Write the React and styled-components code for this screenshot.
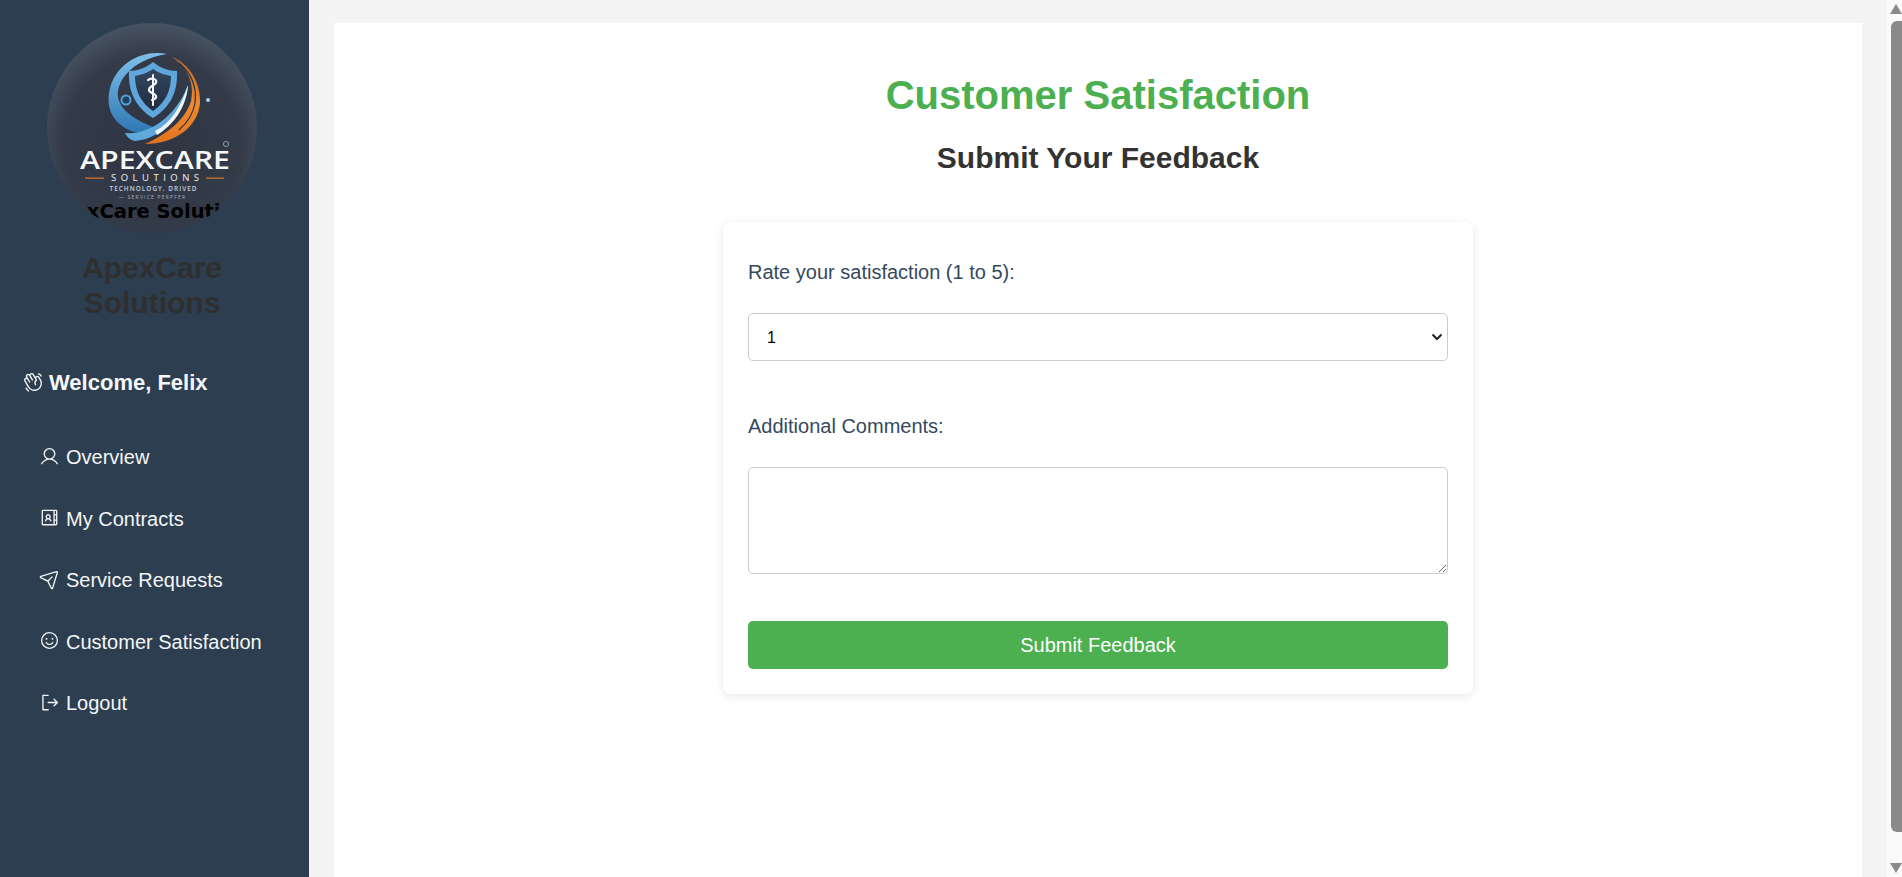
import React from 'react';
import styled, { createGlobalStyle } from 'styled-components';
import { PiHandWaving, PiUser, PiAddressBookTabs, PiPaperPlaneTilt, PiSmiley, PiSignOut } from 'react-icons/pi';

const GlobalStyle = createGlobalStyle`
  body {
    margin: 0;
    background: #f4f4f4;
    font-family: "Liberation Sans", Arial, sans-serif;
  }
`;

const Page = styled.div`
  display: flex;
  min-height: 910px;
  margin-right: 15px;
`;

const Sidebar = styled.aside`
  width: 309px;
  flex-shrink: 0;
  background: #2c3e50;
  padding-top: 23px;
  box-sizing: border-box;
`;

const LogoWrap = styled.div`
  width: 210px;
  height: 210px;
  margin-left: 47px;
`;

const Brand = styled.h2`
  margin: 18px 0 0 47px;
  width: 210px;
  font-size: 30px;
  line-height: 34.5px;
  font-weight: 700;
  text-align: center;
  color: #2f2f2f;
`;

const Welcome = styled.div`
  display: flex;
  align-items: center;
  gap: 5px;
  margin: 50px 0 0 22px;
  height: 26px;
  font-size: 22px;
  font-weight: 700;
  color: #f4f6f8;
  svg {
    font-size: 22px;
    margin-top: -2px;
  }
`;

const Nav = styled.nav`
  display: flex;
  flex-direction: column;
  gap: 10.5px;
  margin-top: 36px;
  padding-left: 39px;
`;

const NavItem = styled.a`
  display: flex;
  align-items: center;
  gap: 6px;
  height: 51px;
  font-size: 20px;
  color: #f4f6f8;
  svg {
    font-size: 21px;
    margin-top: -3px;
  }
`;

const Main = styled.main`
  flex: 1;
  padding: 23px 25px 25px;
  min-width: 0;
`;

const Panel = styled.section`
  background: #fff;
  height: 100%;
  box-sizing: border-box;
  padding-top: 49px;
`;

const Title = styled.h1`
  margin: 0;
  font-size: 40px;
  line-height: 46px;
  font-weight: 700;
  text-align: center;
  color: #4caf50;
`;

const Subtitle = styled.h2`
  margin: 22px 0 0;
  font-size: 30px;
  line-height: 35px;
  font-weight: 700;
  text-align: center;
  color: #333;
`;

const Card = styled.form`
  width: 750px;
  box-sizing: border-box;
  margin: 47px auto 0;
  padding: 25px;
  background: #fff;
  border-radius: 8px;
  box-shadow: 0 2px 10px rgba(0, 0, 0, 0.1);
`;

const Label = styled.label`
  display: block;
  margin: ${(p) => p.$top || 0}px 0 30px;
  padding-top: 14px;
  font-size: 20px;
  line-height: 22px;
  color: #34495e;
`;

const SelectWrap = styled.div`
  position: relative;
`;

const Select = styled.select`
  display: block;
  width: 100%;
  height: 48px;
  padding: 0 18px;
  box-sizing: border-box;
  appearance: none;
  background: #fff;
  color: #000;
  border: 1px solid #ccc;
  border-radius: 5px;
  font-family: inherit;
  font-size: 16px;
`;

const Chevron = styled.svg`
  position: absolute;
  right: 5px;
  top: 20px;
  width: 12px;
  height: 8px;
  pointer-events: none;
`;

const TextArea = styled.textarea`
  display: block;
  width: 100%;
  height: 107px;
  box-sizing: border-box;
  padding: 10px;
  background: #fff;
  border: 1px solid #ccc;
  border-radius: 5px;
  font-family: inherit;
  font-size: 16px;
`;

const Submit = styled.button`
  display: block;
  width: 100%;
  height: 48px;
  margin-top: 47px;
  border: none;
  border-radius: 5px;
  background: #4caf50;
  color: #fff;
  font-family: inherit;
  font-size: 20px;
`;

/* the window's scrollbar, drawn because the browser here hides its own */
const Rail = styled.div`
  position: fixed;
  top: 0;
  right: 0;
  bottom: 0;
  width: 15px;
  display: flex;
  flex-direction: column;
  align-items: flex-end;
  background: #fafafa;
`;

const Arrow = styled.div`
  width: 0;
  height: 0;
  border-left: 6px solid transparent;
  border-right: 6px solid transparent;
  ${(p) => (p.$down
    ? 'border-top: 10px solid #8a8a8a; margin-top: 31px; margin-bottom: 4px;'
    : 'border-bottom: 10px solid #8a8a8a; margin-top: 4px;')}
`;

const Thumb = styled.div`
  flex: 1;
  width: 11px;
  margin-top: 7px;
  background: #8a8a8a;
  border-radius: 6px 0 0 6px / 6px;
`;

function Logo() {
  return (
    <svg viewBox="0 0 210 210" width="210" height="210" role="img" aria-label="ApexCare Solutions logo">
      <defs>
        <radialGradient id="disc" cx="50%" cy="58%" r="60%">
          <stop offset="0" stopColor="#2f3542" />
          <stop offset="0.7" stopColor="#333a48" />
          <stop offset="1" stopColor="#4a5666" />
        </radialGradient>
        <linearGradient id="discFade" x1="0" y1="0" x2="0" y2="1">
          <stop offset="0.7" stopColor="#333a48" stopOpacity="0" />
          <stop offset="1" stopColor="#333a48" stopOpacity="0.9" />
        </linearGradient>
        <linearGradient id="blueArc" x1="0" y1="0" x2="0" y2="1">
          <stop offset="0" stopColor="#7fc0ea" />
          <stop offset="1" stopColor="#2f78b4" />
        </linearGradient>
        <linearGradient id="orangeArc" x1="0" y1="0" x2="0" y2="1">
          <stop offset="0" stopColor="#b8662a" />
          <stop offset="0.55" stopColor="#f18a2b" />
          <stop offset="1" stopColor="#e0741f" />
        </linearGradient>
        <linearGradient id="shieldFill" x1="0" y1="0" x2="0" y2="1">
          <stop offset="0" stopColor="#33475f" />
          <stop offset="1" stopColor="#1f2c3f" />
        </linearGradient>
        <clipPath id="discClip">
          <circle cx="105" cy="105" r="105" />
        </clipPath>
        <clipPath id="altClip">
          <rect x="38" y="170" width="143" height="36" />
        </clipPath>
      </defs>
      <g clipPath="url(#discClip)">
        <rect width="210" height="210" fill="url(#disc)" />
        <rect width="210" height="210" fill="url(#discFade)" />
        {/* swooshes round the shield */}
        <path d="M120 31 C95 26 70 40 63 65 C58 85 66 100 84 108 C92 111 100 108 106 104 C92 98 78 92 72 78 C66 60 85 36 120 31 Z" fill="url(#blueArc)" />
        <path d="M78 110 C100 112 128 96 141 62 C140 90 115 116 88 118 C83 117 80 114 78 110 Z" fill="#5fa9dd" />
        <path d="M108 108 C124 100 134 84 141 62 C139 86 125 103 110 112 Z" fill="#f2f5f8" />
        <path d="M125 34 C142 40 154 60 153 80 C151 104 128 121 98 121 C118 112 138 98 144 78 C148 60 140 44 125 34 Z" fill="url(#orangeArc)" />
        <path d="M132 40 C144 50 150 64 148 80 C146 92 140 100 132 107" fill="none" stroke="#2b3342" strokeWidth="1.2" />
        {/* shield */}
        <path d="M106 39 C113 45 122 48 130 48 C131 68 124 84 106 95 C88 84 81 68 82 48 C90 48 99 45 106 39 Z" fill="#5ea6dc" />
        <path d="M106 46 C112 50 118 52 124 53 C124 68 118 80 106 88 C94 80 88 68 88 53 C94 52 100 50 106 46 Z" fill="url(#shieldFill)" />
        <path d="M106 52 V82" stroke="#f3f6f9" strokeWidth="2" strokeLinecap="round" />
        <path d="M101 57 C106 54 112 57 108 61 C103 64 99 67 105 70 C110 72 111 75 105 77" fill="none" stroke="#f3f6f9" strokeWidth="2.2" strokeLinecap="round" />
        {/* small dots */}
        <circle cx="79" cy="77" r="4.5" fill="#24405e" stroke="#4ea3de" strokeWidth="2" />
        <circle cx="161" cy="77" r="2" fill="#a9d3ee" />
        <circle cx="179" cy="121" r="2.6" fill="none" stroke="#8b97a5" strokeWidth="1" />
        {/* wordmark */}
        <text x="108" y="146" textAnchor="middle" textLength="150" lengthAdjust="spacingAndGlyphs" fontFamily="'Open Sans', sans-serif" fontSize="25" fontWeight="600" fill="#f5f7f9">APEXCARE</text>
        <text x="108" y="158" textAnchor="middle" textLength="88" fontFamily="'Open Sans', sans-serif" fontSize="9.5" fontWeight="500" fill="#eef1f4">SOLUTIONS</text>
        <rect x="38" y="154.5" width="19" height="1.2" fill="#d9752c" />
        <rect x="159" y="154.5" width="18" height="1.2" fill="#d9752c" />
        <text x="106" y="168" textAnchor="middle" textLength="87" fontFamily="'Open Sans', sans-serif" fontSize="6.4" fontWeight="600" fill="#c6d0db">TECHNOLOGY. DRIVED</text>
        <text x="105" y="176" textAnchor="middle" textLength="66" fontFamily="'Open Sans', sans-serif" fontSize="4.8" fill="#aab6c3">— SERVICE PERPFER</text>
        {/* the logo's own cut-off caption */}
        <g clipPath="url(#altClip)">
          <text x="105" y="195" textAnchor="middle" fontFamily="'DejaVu Sans', sans-serif" fontSize="19.5" fontWeight="700" fill="#000">ApexCare Solutions</text>
        </g>
      </g>
    </svg>
  );
}

const items = [
  { label: 'Overview', icon: PiUser },
  { label: 'My Contracts', icon: PiAddressBookTabs },
  { label: 'Service Requests', icon: PiPaperPlaneTilt },
  { label: 'Customer Satisfaction', icon: PiSmiley },
  { label: 'Logout', icon: PiSignOut },
];

export default function App() {
  return (
    <Page>
      <GlobalStyle />
      <Sidebar>
        <LogoWrap>
          <Logo />
        </LogoWrap>
        <Brand>ApexCare Solutions</Brand>
        <Welcome>
          <PiHandWaving />
          Welcome, Felix
        </Welcome>
        <Nav>
          {items.map((item) => (
            <NavItem key={item.label}>
              <item.icon />
              {item.label}
            </NavItem>
          ))}
        </Nav>
      </Sidebar>
      <Main>
        <Panel>
          <Title>Customer Satisfaction</Title>
          <Subtitle>Submit Your Feedback</Subtitle>
          <Card>
            <Label htmlFor="rating">Rate your satisfaction (1 to 5):</Label>
            <SelectWrap>
              <Select id="rating" defaultValue="1">
                <option value="1">1</option>
                <option value="2">2</option>
                <option value="3">3</option>
                <option value="4">4</option>
                <option value="5">5</option>
              </Select>
              <Chevron viewBox="0 0 12 8">
                <path d="M1.5 1.5 L6 6 L10.5 1.5" fill="none" stroke="#222" strokeWidth="2" />
              </Chevron>
            </SelectWrap>
            <Label htmlFor="comments" $top={40}>Additional Comments:</Label>
            <TextArea id="comments" />
            <Submit type="button">Submit Feedback</Submit>
          </Card>
        </Panel>
      </Main>
      <Rail>
        <Arrow />
        <Thumb />
        <Arrow $down />
      </Rail>
    </Page>
  );
}
